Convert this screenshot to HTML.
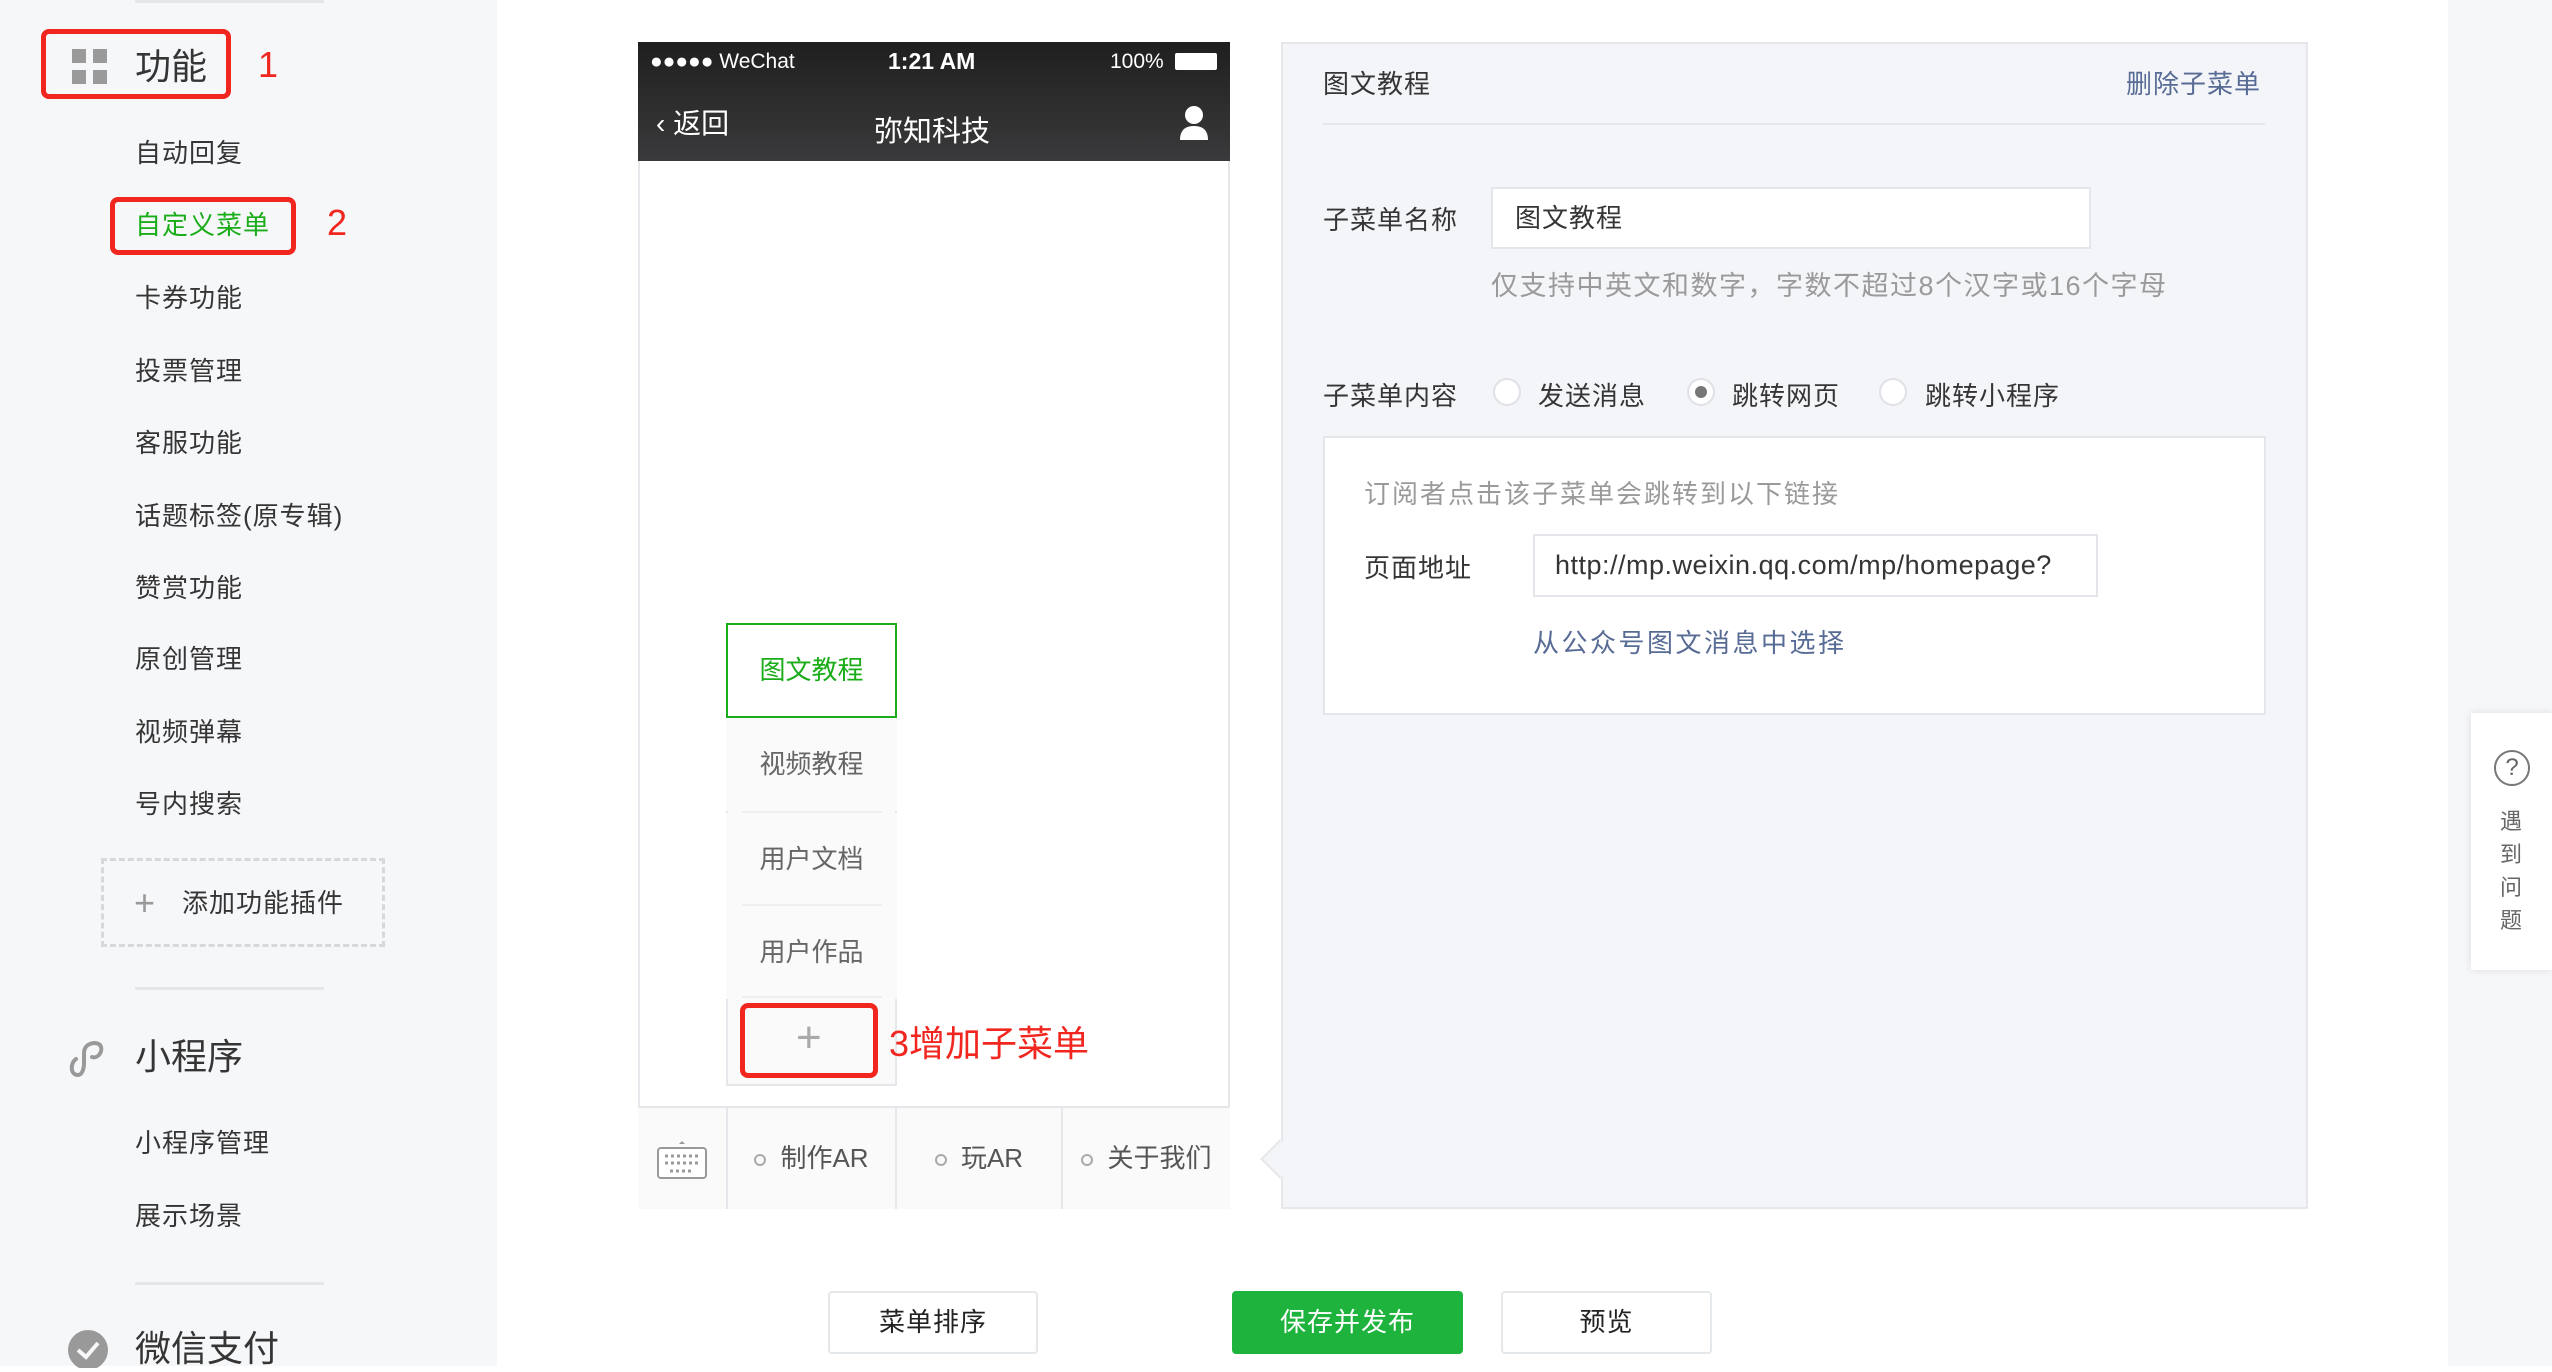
<!DOCTYPE html>
<html><head><meta charset="utf-8"><style>
*{margin:0;padding:0;box-sizing:border-box}
body{width:2552px;height:1366px;overflow:hidden;background:#fff;font-family:"Liberation Sans","Noto Sans CJK SC",sans-serif;color:#353535;position:relative}
.a{position:absolute;white-space:nowrap}
.side{position:absolute;left:0;top:0;width:497px;height:1366px;background:#f6f7f9}
.rstrip{position:absolute;left:2448px;top:0;width:104px;height:1366px;background:#f6f7f9}
.mi{position:absolute;left:135px;font-size:26px;line-height:30px;color:#353535;letter-spacing:1px}
.hr{position:absolute;height:3px;background:#e4e6e9}
.red{position:absolute;border:5px solid #f0261f;border-radius:8px}
.rn{position:absolute;color:#f0261f;font-size:36px}
.phone{position:absolute;left:638px;top:42px;width:592px;height:1167px;border:2px solid #e7e7eb;background:#fff}
.sub{position:absolute;left:726px;width:171px;height:93px;text-align:center;font-size:26px;line-height:93px;color:#666;background:#fafafa}
.cell{position:absolute;top:1108px;height:101px;background:#fafafa;border-left:2px solid #e7e7eb;font-size:26px;color:#555;line-height:101px;text-align:center}
.dot{display:inline-block;width:12px;height:12px;border:2px solid #aaa;border-radius:50%;vertical-align:middle;margin-right:14px}
.lbl{font-size:26px;color:#353535;letter-spacing:1px}
.btn{position:absolute;top:1291px;height:63px;border:2px solid #e4e8eb;border-radius:4px;background:#fff;font-size:26px;text-align:center;line-height:59px;color:#222;letter-spacing:1px}
.radio{position:absolute;width:28px;height:28px;border-radius:50%;border:2px solid #dfe1e6;background:#fff}
</style></head><body>
<div class="side"></div>
<div class="rstrip"></div>
<div class="hr" style="left:135px;top:0;width:189px"></div>
<div class="red" style="left:41px;top:29px;width:190px;height:70px"></div>
<svg class="a" style="left:72px;top:49px" width="36" height="36"><rect x="0" y="0" width="14" height="14" fill="#9a9a9a"/><rect x="21" y="0" width="14" height="14" fill="#9a9a9a"/><rect x="0" y="21" width="14" height="14" fill="#9a9a9a"/><rect x="21" y="21" width="14" height="14" fill="#9a9a9a"/></svg>
<div class="a" style="left:135px;top:38px;font-size:36px">功能</div>
<div class="rn" style="left:258px;top:44px">1</div>
<div class="mi" style="top:138px">自动回复</div>
<div class="red" style="left:110px;top:197px;width:186px;height:58px"></div>
<div class="mi" style="top:210px;color:#1aad19">自定义菜单</div>
<div class="rn" style="left:327px;top:202px">2</div>
<div class="mi" style="top:283px">卡券功能</div>
<div class="mi" style="top:356px">投票管理</div>
<div class="mi" style="top:428px">客服功能</div>
<div class="mi" style="top:501px">话题标签(原专辑)</div>
<div class="mi" style="top:573px">赞赏功能</div>
<div class="mi" style="top:644px">原创管理</div>
<div class="mi" style="top:717px">视频弹幕</div>
<div class="mi" style="top:789px">号内搜索</div>
<div class="a" style="left:101px;top:858px;width:284px;height:89px;border:3px dashed #d6d8dc"></div>
<div class="a" style="left:134px;top:885px;font-size:36px;color:#999;line-height:36px;font-weight:100">+</div>
<div class="mi" style="left:182px;top:888px">添加功能插件</div>
<div class="hr" style="left:135px;top:987px;width:189px"></div>
<svg class="a" style="left:68px;top:1035px" width="42" height="44"><path d="M10 40 C2 40 2 28 8 24 M10 40 C14 40 16 34 16 28 L16 18 C16 8 28 6 32 10 C36 16 30 24 24 22" stroke="#999" stroke-width="4" fill="none" stroke-linecap="round"/></svg>
<div class="a" style="left:135px;top:1028px;font-size:36px">小程序</div>
<div class="mi" style="top:1128px">小程序管理</div>
<div class="mi" style="top:1201px">展示场景</div>
<div class="hr" style="left:135px;top:1282px;width:189px"></div>
<svg class="a" style="left:66px;top:1328px" width="44" height="40"><circle cx="22" cy="22" r="20" fill="#999"/><path d="M12 22 L20 29 L32 15" stroke="#f6f7f9" stroke-width="4" fill="none"/></svg>
<div class="a" style="left:135px;top:1320px;font-size:36px">微信支付</div>

<div class="phone"></div>
<div class="a" style="left:638px;top:42px;width:592px;height:119px;background:linear-gradient(#1f1f1f,#3a3a3c)"></div>
<div class="a" style="left:650px;top:50px;color:#fff;font-size:21px">●●●●● WeChat</div>
<div class="a" style="left:888px;top:48px;color:#fff;font-size:23px;font-weight:bold">1:21 AM</div>
<div class="a" style="left:1110px;top:50px;color:#fff;font-size:21px">100%</div>
<div class="a" style="left:1175px;top:53px;width:42px;height:17px;border:2px solid #fff;background:#fff;border-radius:2px"></div>
<div class="a" style="left:656px;top:102px;color:#fff;font-size:28px">‹ 返回</div>
<div class="a" style="left:874px;top:108px;color:#fff;font-size:29px">弥知科技</div>
<svg class="a" style="left:1178px;top:104px" width="32" height="38"><circle cx="16" cy="11" r="9" fill="#fff"/><path d="M2 36 Q2 22 16 22 Q30 22 30 36Z" fill="#fff"/></svg>

<div class="a" style="left:726px;top:623px;width:171px;height:463px;border:2px solid #e7e7eb;background:#fafafa"></div>
<div class="sub" style="top:623px;height:95px;border:2px solid #1aad19;background:#fff;color:#1aad19;line-height:91px">图文教程</div>
<div class="sub" style="top:718px">视频教程</div>
<div class="hr" style="left:742px;top:811px;width:140px;height:2px;background:#eee"></div>
<div class="sub" style="top:813px">用户文档</div>
<div class="hr" style="left:742px;top:904px;width:140px;height:2px;background:#eee"></div>
<div class="sub" style="top:906px">用户作品</div>
<div class="hr" style="left:742px;top:996px;width:140px;height:2px;background:#eee"></div>
<div class="a" style="left:796px;top:1013px;font-size:44px;color:#aaa;font-weight:100">+</div>
<div class="red" style="left:740px;top:1003px;width:138px;height:75px"></div>
<div class="a" style="left:889px;top:1015px;font-size:36px;color:#f0261f">3增加子菜单</div>

<div class="a" style="left:638px;top:1106px;width:592px;height:2px;background:#e7e7eb"></div>
<div class="cell" style="left:638px;width:88px;border-left:none">
<svg width="52" height="40" style="vertical-align:middle"><rect x="2" y="8" width="48" height="30" rx="3" fill="#fff" stroke="#999" stroke-width="2"/><path d="M9 16h34M9 23h34M14 31h24" stroke="#999" stroke-width="3" stroke-dasharray="3 3"/><path d="M23 4 l3-3 3 3z" fill="#999"/></svg></div>
<div class="cell" style="left:726px;width:169px"><span class="dot"></span>制作AR</div>
<div class="cell" style="left:895px;width:166px"><span class="dot"></span>玩AR</div>
<div class="cell" style="left:1061px;width:169px"><span class="dot"></span>关于我们</div>

<div class="a" style="left:1281px;top:42px;width:1027px;height:1167px;background:#f4f5f9;border:2px solid #e7e7eb"></div>
<div class="a" style="left:1266px;top:1145px;width:28px;height:28px;background:#f4f5f9;border-left:2px solid #e7e7eb;border-bottom:2px solid #e7e7eb;transform:rotate(45deg)"></div>
<div class="a lbl" style="left:1323px;top:64px">图文教程</div>
<div class="a lbl" style="left:2126px;top:64px;color:#576b95">删除子菜单</div>
<div class="a" style="left:1323px;top:123px;width:942px;height:2px;background:#e4e6eb"></div>
<div class="a lbl" style="left:1323px;top:200px">子菜单名称</div>
<div class="a" style="left:1491px;top:187px;width:600px;height:62px;background:#fff;border:2px solid #e4e6eb;font-size:26px;line-height:58px;padding-left:22px;letter-spacing:1px">图文教程</div>
<div class="a" style="left:1491px;top:264px;font-size:27px;color:#9a9a9a;letter-spacing:1.5px">仅支持中英文和数字，字数不超过8个汉字或16个字母</div>
<div class="a lbl" style="left:1323px;top:376px">子菜单内容</div>
<div class="radio" style="left:1493px;top:378px"></div>
<div class="a lbl" style="left:1538px;top:376px">发送消息</div>
<div class="radio" style="left:1687px;top:378px"></div>
<div class="a" style="left:1695px;top:386px;width:12px;height:12px;border-radius:50%;background:#777"></div>
<div class="a lbl" style="left:1732px;top:376px">跳转网页</div>
<div class="radio" style="left:1879px;top:378px"></div>
<div class="a lbl" style="left:1925px;top:376px">跳转小程序</div>
<div class="a" style="left:1323px;top:436px;width:943px;height:279px;background:#fff;border:2px solid #e4e6eb"></div>
<div class="a" style="left:1364px;top:474px;font-size:26px;color:#9a9a9a;letter-spacing:2px">订阅者点击该子菜单会跳转到以下链接</div>
<div class="a lbl" style="left:1364px;top:548px">页面地址</div>
<div class="a" style="left:1533px;top:534px;width:565px;height:63px;border:2px solid #e4e6eb;font-size:27px;line-height:59px;padding-left:20px;overflow:hidden;letter-spacing:0.5px">http://mp.weixin.qq.com/mp/homepage?</div>
<div class="a lbl" style="left:1533px;top:623px;color:#576b95;letter-spacing:2.5px">从公众号图文消息中选择</div>

<div class="btn" style="left:828px;width:210px">菜单排序</div>
<div class="btn" style="left:1232px;width:231px;background:#1db33d;border-color:#1db33d;color:#fff">保存并发布</div>
<div class="btn" style="left:1501px;width:211px">预览</div>

<div class="a" style="left:2471px;top:713px;width:81px;height:257px;background:#fff;box-shadow:0 0 8px rgba(0,0,0,.1)"></div>
<div class="a" style="left:2494px;top:750px;width:36px;height:36px;border:2px solid #777;border-radius:50%;text-align:center;font-size:24px;line-height:32px;color:#666">?</div>
<div class="a" style="left:2500px;top:805px;width:26px;font-size:22px;line-height:33px;color:#666;white-space:normal">遇到问题</div>
</body></html>
